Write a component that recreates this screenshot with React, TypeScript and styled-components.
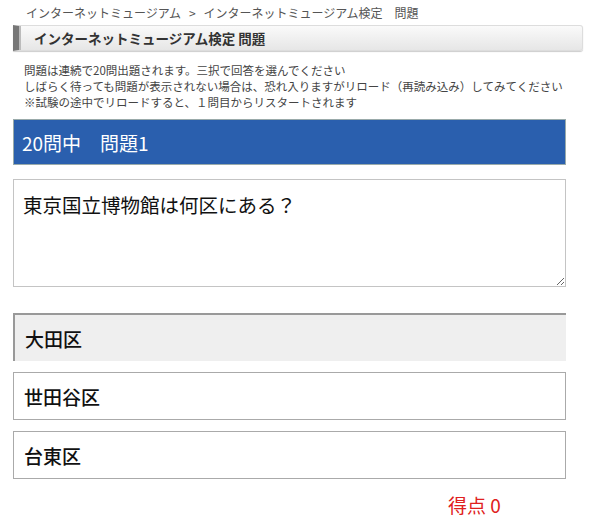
import styled, { createGlobalStyle } from "styled-components";

const GlobalStyle = createGlobalStyle`
  body {
    margin: 0;
    background: #fff;
    font-family: "Noto Sans CJK JP", "Noto Sans", sans-serif;
  }
`;

const Page = styled.div`
  width: 590px;
  padding: 4px 0 0 13px;
  box-sizing: border-box;
`;
const Breadcrumb = styled.div`
  padding-left: 13px;
  font-size: 12px;
  line-height: 17px;
  color: #555;
  span {
    margin: 0 8px;
  }
`;
const Heading = styled.h1`
  margin: 4px 0 0;
  width: 570px;
  height: 26px;
  box-sizing: border-box;
  display: flex;
  align-items: center;
  padding-left: 15px;
  font-size: 13.5px;
  font-weight: bold;
  color: #333;
  border: 1px solid #ddd;
  border-left: 6px solid #777;
  border-radius: 0 3px 3px 0;
  background: linear-gradient(#fafafa, #e6e6e6);
  box-shadow: inset 2px 0 0 #bbb, 0 1px 1px #ccc;
`;
const Notes = styled.div`
  margin: 11px 0 0 11px;
  font-size: 11.5px;
  line-height: 16px;
  color: #444;
`;
const Quiz = styled.div`
  width: 553px;
  margin-top: 9px;
  display: flex;
  flex-direction: column;
`;
const QuestionBar = styled.div`
  height: 46px;
  box-sizing: border-box;
  background: #2a5fae;
  border: 1px solid #9aa;
  color: #fff;
  font-size: 19px;
  display: flex;
  align-items: center;
  padding-left: 8px;
  white-space: pre;
`;
const QuestionText = styled.textarea`
  margin-top: 14px;
  height: 108px;
  box-sizing: border-box;
  border: 1px solid #c4c4c4;
  padding: 11px 9px;
  font-family: "Noto Sans CJK JP", sans-serif;
  font-size: 19.5px;
  line-height: 28px;
  color: #111;
  resize: vertical;
  outline: none;
`;
const Choices = styled.div`
  margin-top: 26px;
  display: flex;
  flex-direction: column;
  gap: 11px;
`;
const Choice = styled.div<{ $selected?: boolean }>`
  height: 48px;
  box-sizing: border-box;
  display: flex;
  align-items: center;
  padding-left: 10px;
  font-size: 19px;
  font-weight: 500;
  color: #111;
  background: ${(p) => (p.$selected ? "#efefef" : "#fff")};
  border: 1px solid #aaa;
  ${(p) =>
    p.$selected &&
    `border-top: 2px solid #999; border-left: 2px solid #999; border-right: none; border-bottom: none;`}
`;
const Score = styled.div`
  margin: 12px 0 0 435px;
  font-size: 19px;
  color: #e02020;
`;

const choices = ["大田区", "世田谷区", "台東区"];

export default function App() {
  return (
    <>
      <GlobalStyle />
      <Page>
        <Breadcrumb>
          インターネットミュージアム<span>&gt;</span>インターネットミュージアム検定　問題
        </Breadcrumb>
        <Heading>インターネットミュージアム検定 問題</Heading>
        <Notes>
          問題は連続で20問出題されます。三択で回答を選んでください
          <br />
          しばらく待っても問題が表示されない場合は、恐れ入りますがリロード（再読み込み）してみてください
          <br />
          ※試験の途中でリロードすると、１問目からリスタートされます
        </Notes>
        <Quiz>
          <QuestionBar>{"20問中　問題1"}</QuestionBar>
          <QuestionText readOnly defaultValue="東京国立博物館は何区にある？" />
          <Choices>
            {choices.map((c, i) => (
              <Choice key={c} $selected={i === 0}>
                {c}
              </Choice>
            ))}
          </Choices>
          <Score>得点 0</Score>
        </Quiz>
      </Page>
    </>
  );
}
